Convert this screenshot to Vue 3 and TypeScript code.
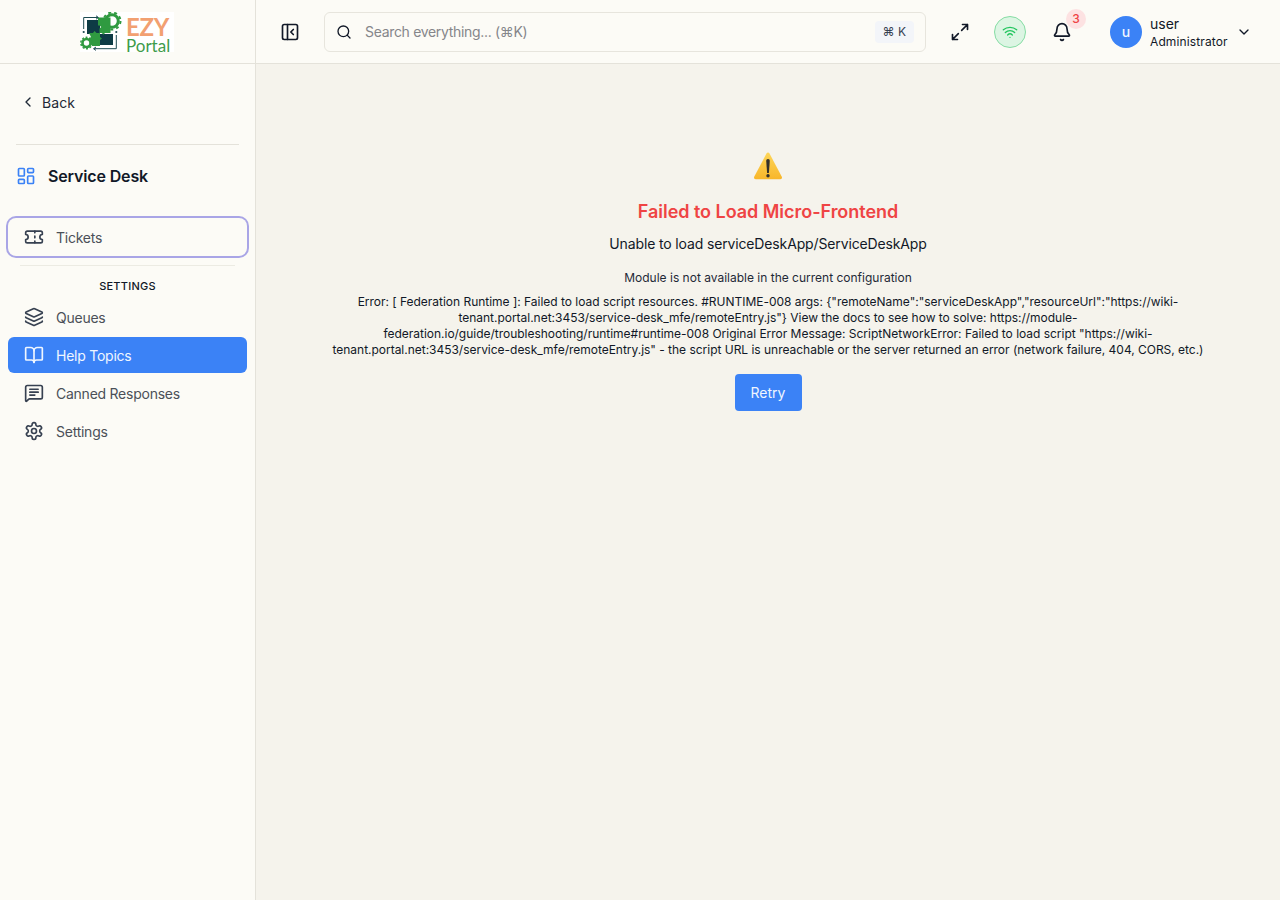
<script setup lang="ts">
interface NavItem { label: string; icon: string; active?: boolean }
const items: NavItem[] = [
  { label: 'Queues', icon: 'layers' },
  { label: 'Help Topics', icon: 'book', active: true },
  { label: 'Canned Responses', icon: 'message' },
  { label: 'Settings', icon: 'gear' },
]
</script>

<template>
  <div class="app">
    <aside class="sidebar">
      <div class="brand">
        <div class="logo">
          <svg class="logo-mark" viewBox="3 4 42 40" width="42" height="40">
            <path d="M6.700 21V9.500H21M19 7.800l2.500 1.700-2.500 1.700" fill="none" stroke="#1d4a52" stroke-width="1"/>
            <path d="M17 40.700h22.300V27M19 39l-2.500 1.700 2.500 1.700" fill="none" stroke="#1d4a52" stroke-width="1"/>
            <circle cx="6.700" cy="24" r="1.100" fill="#1d4a52"/>
            <circle cx="39.300" cy="24" r="1.100" fill="#1d4a52"/>
            <circle cx="35" cy="13" r="6.300" fill="#fff" stroke="#2f9a40" stroke-width="3"/>
            <circle cx="35" cy="13" r="8.500" fill="none" stroke="#2f9a40" stroke-width="2" stroke-dasharray="3 3"/>
            <rect x="10" y="12" width="13" height="14" fill="#0e3b45"/>
            <rect x="23" y="26" width="13" height="11" fill="#0e3b45"/>
            <path d="M21 9.500h12.500v15.500h-5.500l-1.500 1.800-1.800-1.800H22.500v-4.500l1.800-1.500-1.800-1.500H21z" fill="#2f9a40"/>
            <path d="M12 25h4l1.500-2 2 2h3.500v4l2 1.500-2 1.500v6h-8l-1.500-3-1.500-1.500v-3l2-1.500z" fill="#2f9a40"/>
            <circle cx="9.500" cy="35" r="4" fill="#fff" stroke="#2f9a40" stroke-width="2.600"/>
            <circle cx="9.500" cy="35" r="5.700" fill="none" stroke="#2f9a40" stroke-width="1.500" stroke-dasharray="2 1.600"/>
          </svg>
          <div class="logo-text">
            <span class="ezy">EZY</span>
            <span class="portal">Portal</span>
          </div>
        </div>
      </div>

      <nav class="side-body">
        <div class="back">
          <svg class="ic16" viewBox="0 0 24 24"><path d="M15 18l-6-6 6-6"/></svg>
          <span>Back</span>
        </div>
        <div class="rule"></div>
        <div class="section-title">
          <svg class="ic20 blue" viewBox="0 0 24 24">
            <rect x="3" y="3" width="7" height="9" rx="1"/><rect x="14" y="3" width="7" height="5" rx="1"/>
            <rect x="14" y="12" width="7" height="9" rx="1"/><rect x="3" y="16" width="7" height="5" rx="1"/>
          </svg>
          <span>Service Desk</span>
        </div>

        <div class="row focused">
          <svg class="ic20" viewBox="0 0 24 24">
            <path d="M2 9a3 3 0 0 1 0 6v2a2 2 0 0 0 2 2h16a2 2 0 0 0 2-2v-2a3 3 0 0 1 0-6V7a2 2 0 0 0-2-2H4a2 2 0 0 0-2 2z"/>
            <path d="M13 5v2M13 17v2M13 11v2"/>
          </svg>
          <span>Tickets</span>
        </div>
        <div class="rule2"></div>
        <div class="group-label">SETTINGS</div>

        <div class="list">
          <div v-for="it in items" :key="it.label" class="row" :class="{ active: it.active }">
            <svg v-if="it.icon === 'layers'" class="ic20" viewBox="0 0 24 24">
              <path d="M12.800 2.200a2 2 0 0 0-1.600 0L2.600 6.100a1 1 0 0 0 0 1.800l8.600 3.900a2 2 0 0 0 1.600 0l8.600-3.900a1 1 0 0 0 0-1.800z"/>
              <path d="M2 12a1 1 0 0 0 .6.900l8.600 3.900a2 2 0 0 0 1.600 0l8.600-3.900A1 1 0 0 0 22 12"/>
              <path d="M2 17a1 1 0 0 0 .6.900l8.600 3.900a2 2 0 0 0 1.600 0l8.600-3.900A1 1 0 0 0 22 17"/>
            </svg>
            <svg v-else-if="it.icon === 'book'" class="ic20" viewBox="0 0 24 24">
              <path d="M12 7v14"/>
              <path d="M3 18a1 1 0 0 1-1-1V4a1 1 0 0 1 1-1h5a4 4 0 0 1 4 4 4 4 0 0 1 4-4h5a1 1 0 0 1 1 1v13a1 1 0 0 1-1 1h-6a3 3 0 0 0-3 3 3 3 0 0 0-3-3z"/>
            </svg>
            <svg v-else-if="it.icon === 'message'" class="ic20" viewBox="0 0 24 24">
              <path d="M22 17a2 2 0 0 1-2 2H6.800a2 2 0 0 0-1.400.6l-2.200 2.200A.7.7 0 0 1 2 21.300V5a2 2 0 0 1 2-2h16a2 2 0 0 1 2 2z"/>
              <path d="M7 7.500h10M7 11h10M7 14.500h6"/>
            </svg>
            <svg v-else class="ic20" viewBox="0 0 24 24">
              <path d="M12.220 2h-.44a2 2 0 0 0-2 2v.18a2 2 0 0 1-1 1.730l-.43.250a2 2 0 0 1-2 0l-.15-.080a2 2 0 0 0-2.730.730l-.22.380a2 2 0 0 0 .730 2.730l.15.100a2 2 0 0 1 1 1.720v.510a2 2 0 0 1-1 1.740l-.15.090a2 2 0 0 0-.730 2.730l.22.380a2 2 0 0 0 2.730.730l.15-.080a2 2 0 0 1 2 0l.43.250a2 2 0 0 1 1 1.730V20a2 2 0 0 0 2 2h.44a2 2 0 0 0 2-2v-.18a2 2 0 0 1 1-1.730l.43-.250a2 2 0 0 1 2 0l.15.080a2 2 0 0 0 2.730-.730l.22-.390a2 2 0 0 0-.730-2.730l-.15-.080a2 2 0 0 1-1-1.740v-.500a2 2 0 0 1 1-1.740l.15-.090a2 2 0 0 0 .730-2.730l-.22-.380a2 2 0 0 0-2.730-.730l-.15.080a2 2 0 0 1-2 0l-.43-.250a2 2 0 0 1-1-1.730V4a2 2 0 0 0-2-2z"/>
              <circle cx="12" cy="12" r="3"/>
            </svg>
            <span>{{ it.label }}</span>
          </div>
        </div>
      </nav>
    </aside>

    <div class="main">
      <header class="topbar">
        <svg class="ic20 dark toggle" viewBox="0 0 24 24">
          <rect x="3" y="3" width="18" height="18" rx="2"/><path d="M9 3v18M16 15l-3-3 3-3"/>
        </svg>
        <div class="search">
          <svg class="ic16 dark" viewBox="0 0 24 24"><circle cx="11" cy="11" r="8"/><path d="M21 21l-4.300-4.300"/></svg>
          <span class="placeholder">Search everything... (⌘K)</span>
          <span class="kbd">⌘ K</span>
        </div>
        <svg class="ic20 dark expand" viewBox="0 0 24 24">
          <path d="M14 10l7-7M21 9V3h-6M10 14l-7 7M3 15v6h6"/>
        </svg>
        <div class="wifi">
          <svg class="ic16 green" viewBox="0 0 24 24">
            <path d="M2 8.800a15 15 0 0 1 20 0M5 12.900a10 10 0 0 1 14 0M8.500 16.400a5 5 0 0 1 7 0M12 20h.01"/>
          </svg>
        </div>
        <div class="bell">
          <svg class="ic20 dark" viewBox="0 0 24 24">
            <path d="M10.300 21a1.940 1.940 0 0 0 3.400 0"/>
            <path d="M3.300 15.300A1 1 0 0 0 4 17h16a1 1 0 0 0 .7-1.700C19.400 14 18 12.500 18 8A6 6 0 0 0 6 8c0 4.500-1.400 6-2.700 7.300"/>
          </svg>
          <span class="badge">3</span>
        </div>
        <div class="user">
          <span class="avatar">u</span>
          <div class="who">
            <span class="name">user</span>
            <span class="role">Administrator</span>
          </div>
          <svg class="ic16 dark" viewBox="0 0 24 24"><path d="M6 9l6 6 6-6"/></svg>
        </div>
      </header>

      <main class="content">
        <svg class="warn" viewBox="0 0 32 32" width="32" height="32">
          <defs>
            <linearGradient id="warnFill" x1="0" y1="0" x2="0" y2="1">
              <stop offset="0" stop-color="#fdd65a"/><stop offset="1" stop-color="#f8b62a"/>
            </linearGradient>
          </defs>
          <path d="M14.500 3.500c.7-1.300 2.300-1.300 3 0l12.300 23.200c.6 1.200-.2 2.500-1.500 2.500H3.700c-1.300 0-2.100-1.300-1.500-2.500z" fill="url(#warnFill)"/>
          <path d="M14.200 10.700a1.800 1.800 0 0 1 3.600 0l-.9 12.300h-1.800z" fill="#33302a"/>
          <circle cx="16" cy="25.700" r="1.700" fill="#33302a"/>
        </svg>
        <h1>Failed to Load Micro-Frontend</h1>
        <p class="sub">Unable to load serviceDeskApp/ServiceDeskApp</p>
        <p class="detail">Module is not available in the current configuration</p>
        <p class="error">Error: [ Federation Runtime ]: Failed to load script resources. #RUNTIME-008 args: {"remoteName":"serviceDeskApp","resourceUrl":"https://wiki-tenant.portal.net:3453/service-desk_mfe/remoteEntry.js"} View the docs to see how to solve: https://module-federation.io/guide/troubleshooting/runtime#runtime-008 Original Error Message: ScriptNetworkError: Failed to load script "https://wiki-tenant.portal.net:3453/service-desk_mfe/remoteEntry.js" - the script URL is unreachable or the server returned an error (network failure, 404, CORS, etc.)</p>
        <button class="retry" type="button">Retry</button>
      </main>
    </div>
  </div>
</template>

<style>
html, body { margin: 0; background: #f5f3ec; }
</style>

<style scoped>
.app {
  display: flex;
  width: 1280px;
  height: 900px;
  overflow: hidden;
  font-family: Inter, "Liberation Sans", sans-serif;
  color: #111827;
  background: #f5f3ec;
}
svg { flex: none; }
.ic16, .ic20 {
  fill: none;
  stroke: currentColor;
  stroke-width: 2;
  stroke-linecap: round;
  stroke-linejoin: round;
}
.ic16 { width: 16px; height: 16px; }
.ic20 { width: 20px; height: 20px; }
.blue { color: #3b82f6; }
.dark { color: #111827; }
.green { color: #22c55e; }

.sidebar {
  width: 256px;
  flex: none;
  box-sizing: border-box;
  background: #fcfbf6;
  border-right: 1px solid #e4e2da;
  display: flex;
  flex-direction: column;
}
.brand {
  height: 64px;
  box-sizing: border-box;
  border-bottom: 1px solid #e4e2da;
  display: flex;
  align-items: center;
  justify-content: center;
}
.logo {
  display: flex;
  align-items: flex-start;
  gap: 4px;
  width: 94px;
  height: 40px;
  background: #fff;
  margin-left: -1px;
}
.logo-text { display: flex; flex-direction: column; margin-top: 5px; }
.ezy { font-size: 24px; font-weight: 700; color: #f2a071; line-height: 20px; font-family: Lato, sans-serif; letter-spacing: -.3px; }
.portal { font-size: 17px; color: #3f9c4b; line-height: 17px; font-family: Lato, sans-serif; }

.side-body { display: flex; flex-direction: column; padding: 0 8px; }
.back {
  display: flex;
  align-items: center;
  gap: 6px;
  height: 20px;
  margin: 28px 0 0 12px;
  font-size: 14px;
  letter-spacing: .1px;
  color: #1f2937;
}
.rule { height: 1px; background: #e4e2da; margin: 32px 8px 0; }
.section-title {
  display: flex;
  align-items: center;
  gap: 12px;
  height: 24px;
  margin: 19px 8px 30px;
  font-size: 16px;
  font-weight: 600;
  letter-spacing: -.15px;
  color: #111827;
}
.row {
  display: flex;
  align-items: center;
  gap: 12px;
  height: 36px;
  padding: 0 16px;
  border-radius: 6px;
  font-size: 14px;
  letter-spacing: -.25px;
  color: #4b5058;
}
.row.focused {
  height: 38px;
  border-radius: 8px;
  box-shadow: 0 0 0 2px #a9a5e6;
  background: #fcfbf6;
}
.row .ic20 { color: #374151; }
.rule2 { height: 1px; background: #ecebe3; margin: 9px 12px 0; }
.group-label {
  text-align: center;
  font-size: 11px;
  line-height: 16px;
  letter-spacing: .25px;
  font-weight: 500;
  color: #111827;
  margin-top: 12px;
  margin-bottom: 5px;
}
.list { display: flex; flex-direction: column; gap: 2px; }
.row.active { background: #3b82f6; color: #eff6ff; }
.row.active .ic20 { color: #eff6ff; }

.main { flex: 1; min-width: 0; display: flex; flex-direction: column; }
.topbar {
  height: 64px;
  box-sizing: border-box;
  flex: none;
  background: #fcfbf6;
  border-bottom: 1px solid #e4e2da;
  display: flex;
  align-items: center;
  padding-left: 24px;
}
.toggle { margin-right: 24px; }
.search {
  width: 602px;
  height: 40px;
  box-sizing: border-box;
  border: 1px solid #e7e5dd;
  border-radius: 6px;
  display: flex;
  align-items: center;
  padding: 0 11px;
  gap: 13px;
}
.placeholder { flex: 1; font-size: 14px; letter-spacing: -.32px; color: #85868a; }
.kbd {
  background: #f3f5f9;
  border-radius: 4px;
  padding: 0 8px;
  height: 22px;
  line-height: 22px;
  font-size: 12px;
  color: #374151;
}
.expand { margin-left: 24px; }
.wifi {
  width: 30px;
  height: 30px;
  margin-left: 24px;
  border-radius: 50%;
  border: 1px solid #86dda4;
  background: #dcf5e3;
  display: flex;
  align-items: center;
  justify-content: center;
}
.bell {
  position: relative;
  margin-left: 26px;
  width: 20px;
  height: 20px;
}
.badge {
  position: absolute;
  top: -13px;
  left: 14px;
  width: 20px;
  height: 20px;
  border-radius: 50%;
  background: #fde2e2;
  color: #ef4444;
  font-size: 12px;
  font-weight: 500;
  text-align: center;
  line-height: 20px;
}
.user { display: flex; align-items: center; margin-left: 38px; }
.avatar {
  width: 32px;
  height: 32px;
  border-radius: 50%;
  background: #3b82f6;
  color: #eff6ff;
  font-size: 14px;
  font-weight: 500;
  line-height: 32px;
  text-align: center;
}
.who { display: flex; flex-direction: column; margin: 2px 8px 0 8px; }
.name { font-size: 14px; line-height: 18px; color: #111827; }
.role { font-size: 12px; line-height: 18px; color: #111827; letter-spacing: .12px; }

.content {
  flex: 1;
  display: flex;
  flex-direction: column;
  align-items: center;
  padding-top: 86px;
  box-sizing: border-box;
}
.warn { display: block; }
h1 {
  margin: 16px 0 0;
  font-size: 18px;
  line-height: 28px;
  font-weight: 600;
  letter-spacing: -.03px;
  color: #ef4444;
}
.sub {
  margin: 8px 0 0;
  font-size: 14px;
  line-height: 20px;
  letter-spacing: -.14px;
  color: #111827;
}
.detail {
  margin: 16px 0 0;
  font-size: 12px;
  line-height: 16px;
  color: #1f2937;
}
.error {
  margin: 8px 0 0;
  width: 896px;
  font-size: 12px;
  line-height: 16px;
  letter-spacing: -.02px;
  color: #111827;
  text-align: center;
}
.retry {
  margin-top: 16px;
  width: 67px;
  height: 37px;
  border: 0;
  border-radius: 4px;
  background: #3b82f6;
  color: #eff6ff;
  font-family: inherit;
  font-size: 14px;
}
</style>
